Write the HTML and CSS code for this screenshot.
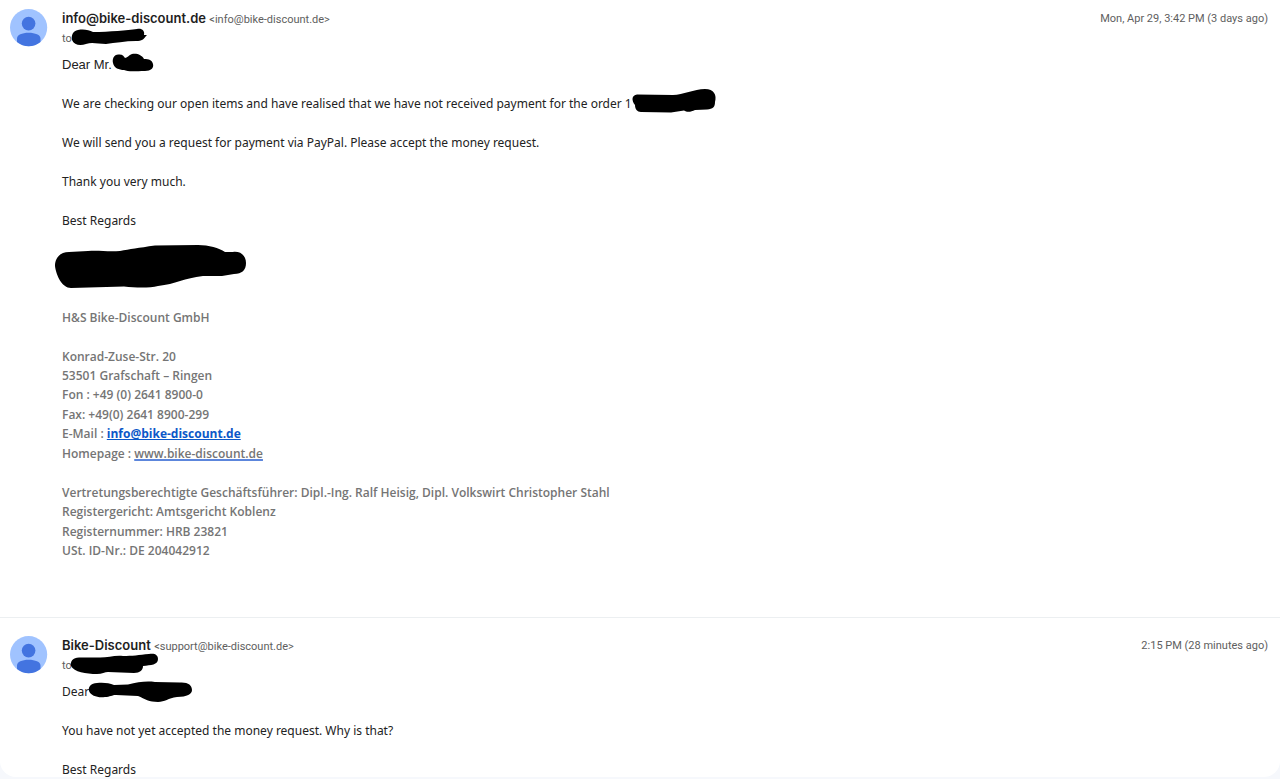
FILE: index.html
```html
<!DOCTYPE html>
<html lang="en">
<head>
<meta charset="utf-8">
<meta name="viewport" content="width=device-width, initial-scale=1">
<title>Mail conversation</title>
<link rel="stylesheet" href="styles.css">
</head>
<body>
<main class="thread">
  <article class="message">
    <svg class="avatar" viewBox="0 0 38 38" aria-hidden="true"><circle cx="18.600" cy="18.600" r="18.6" fill="#a0c3ff"/><circle cx="18.600" cy="14.600" r="6.8" fill="#4374e0"/><path d="M7 33V29.500C7 26 12 23.800 18.600 23.800S30.500 26 30.500 29.500V33a18.600 18.600 0 0 1-23.500 0z" fill="#4374e0"/></svg>
    <div class="content">
      <header class="head">
        <div class="from"><strong class="name">info@bike-discount.de</strong> <span class="address">&lt;info@bike-discount.de&gt;</span></div>
        <time class="date">Mon, Apr 29, 3:42 PM (3 days ago)</time>
      </header>
      <div class="to">to<svg class="mark mark-to" width="78" height="18" viewBox="71 28 78 18" aria-hidden="true"><path d="M78 30C73 31 71 35 72 40C74 45 80 46 86 44C92 42 98 44 106 44C115 43 125 41 136 41C142 41 144 39 146 36L147 35L144 35C145 31 142 28 137 29C127 30 110 32 93 32C89 30 84 29 78 30Z"/></svg></div>
      <div class="body">
        <p><span class="greeting">Dear Mr.</span><svg class="mark mark-mr" width="42" height="20" viewBox="112 53 42 20" aria-hidden="true"><path d="M119 54.500C114 54 112 59 113 63C114 68 119 70 124 70C128 72 136 71 145 71C151 71 154 68 153 64C152 60 149 59 144 59C142 55 137 53 132 54C129 55 127 58 125 58C123 55 122 54.500 119 54.500Z"/></svg></p>
        <p>We are checking our open items and have realised that we have not received payment for the order 1<svg class="mark mark-order" width="86" height="26" viewBox="632 87 86 26" aria-hidden="true"><path d="M638 94.500C633 95 632 100 636 105C636 109 638 112 642 112L672 112.500L685 110.500C688 112.500 692 112 696 110L708 109.500C714 109 716 107 716 102C718 95 715 89 706 89C695 89 684 95 674 95Z"/></svg></p>
        <p>We will send you a request for payment via PayPal. Please accept the money request.</p>
        <p>Thank you very much.</p>
        <p>Best Regards</p>
        <div class="signer"><svg class="mark mark-signer" width="194" height="46" viewBox="54 244 194 46" aria-hidden="true"><path d="M69 252C60 252 55 258 55 266C56 275 62 288 71 288L124 286.500C137 288 150 288 158 286C176 284 184 278 203 276L222 276L234 274C242 274 246 270 246 263C246 256 241 251 233 252L225 252C219 248 209 245 198 245L155 245.500C138 248 130 249 120 251C107 252 99 250 88 251Z"/></svg></div>
        <div class="signature">
          <p>H&amp;S Bike-Discount GmbH</p>
          <p>Konrad-Zuse-Str. 20<br>53501 Grafschaft – Ringen<br>Fon : +49 (0) 2641 8900-0<br>Fax: +49(0) 2641 8900-299<br>E-Mail : <a class="mail" href="mailto:info@bike-discount.de">info@bike-discount.de</a><br>Homepage : <a class="site" href="http://www.bike-discount.de">www.bike-discount.de</a></p>
          <p>Vertretungsberechtigte Geschäftsführer: Dipl.-Ing. Ralf Heisig, Dipl. Volkswirt Christopher Stahl<br>Registergericht: Amtsgericht Koblenz<br>Registernummer: HRB 23821<br>USt. ID-Nr.: DE 204042912</p>
        </div>
      </div>
    </div>
  </article>
  <article class="message">
    <svg class="avatar" viewBox="0 0 38 38" aria-hidden="true"><circle cx="18.600" cy="18.600" r="18.6" fill="#a0c3ff"/><circle cx="18.600" cy="14.600" r="6.800" fill="#4374e0"/><path d="M7 33V29.500C7 26 12 23.800 18.600 23.800S30.500 26 30.500 29.500V33a18.600 18.600 0 0 1-23.500 0z" fill="#4374e0"/></svg>
    <div class="content">
      <header class="head">
        <div class="from"><strong class="name">Bike-Discount</strong> <span class="address">&lt;support@bike-discount.de&gt;</span></div>
        <time class="date">2:15 PM (28 minutes ago)</time>
      </header>
      <div class="to">to<svg class="mark mark-to2" width="90" height="22" viewBox="70 653 90 22" aria-hidden="true"><path d="M79 657.500C73 658 70 661 71 666C74 672 86 674 97 674C102 674 105 672 108 672L134 673C140 673 143 670 143 666C151 665 158 665 158 659C158 655 155 653 149 654C139 655 132 656 123 656C114 655 107 658 98 657.500Z"/></svg></div>
      <div class="body">
        <p>Dear<svg class="mark mark-dear" width="104" height="22" viewBox="88 682 104 22" aria-hidden="true"><path d="M97 684C91 684 88 688 89 692C91 697 98 699 105 698C110 698 112 696 116 696L138 697C145 700 149 703 158 703C165 703 168 699 177 698C187 698 192 695 192 691C192 686 188 683 180 683.500L155 683C146 682 138 683 128 685.500L114 686C109 684 104 683.500 97 684Z"/></svg></p>
        <p>You have not yet accepted the money request. Why is that?</p>
        <p>Best Regards</p>
      </div>
    </div>
  </article>
</main>
</body>
</html>
```
FILE: styles.css
```css
body {
  margin: 0;
  background: #f6f8fc;
  color: #222;
  font-family: "Noto Sans", "Open Sans", sans-serif;
  font-size: 12px;
  line-height: 1.62;
}

.thread {
  box-sizing: border-box;
  height: calc(100vh - 2px);
  background: #fff;
  border-radius: 0 0 16px 16px;
}

.message {
  display: flex;
  gap: 14px;
  padding: 9px 12px 0 10px;
}

.message + .message {
  border-top: 1px solid #eceff1;
  margin-top: 37px;
  padding-top: 18px;
}

.avatar {
  flex: none;
  width: 38px;
  height: 38px;
}

.content {
  flex: 1;
  min-width: 0;
}

.head {
  display: flex;
  justify-content: space-between;
  gap: 16px;
  font-family: Inter, Roboto, sans-serif;
  line-height: 19px;
}

.name {
  color: #1f1f1f;
  font-size: 13px;
  font-weight: 600;
}

.address,
.date {
  color: #5e5e5e;
  font-family: Roboto, sans-serif;
  font-size: 11px;
}

.date {
  white-space: nowrap;
}

.to {
  position: relative;
  margin-top: 1px;
  color: #5e5e5e;
  font-family: Roboto, sans-serif;
  font-size: 11px;
  line-height: 18px;
}

.body {
  margin-top: 7px;
}

.body p {
  position: relative;
  margin: 0 0 1.62em;
}

.message:last-child .body p:last-child {
  margin-bottom: 0;
}

.greeting {
  font-family: "Liberation Sans", Arial, sans-serif;
  font-size: 13px;
  line-height: 1;
}

.signer {
  position: relative;
  height: 3.24em;
  margin-bottom: 1.62em;
}

.signature {
  color: #757575;
  font-family: "Open Sans", "Noto Sans", sans-serif;
  font-weight: 600;
}

.mail {
  color: #0b57c8;
  font-weight: 700;
}

.site {
  color: #757575;
  text-decoration-color: #5c86dc;
  text-decoration-thickness: 2px;
}

/* Ink strokes drawn over private details */
.mark {
  position: absolute;
  fill: #000;
}

.mark-to {
  left: 9px;
  top: -2px;
}

.mark-mr {
  left: 50px;
  top: -2px;
}

.mark-order {
  left: 569px;
  top: -7px;
}

.mark-signer {
  left: -8px;
  top: -5px;
}

.mark-to2 {
  left: 8px;
  top: -4px;
}

.mark-dear {
  left: 26px;
  top: -1px;
}
```
